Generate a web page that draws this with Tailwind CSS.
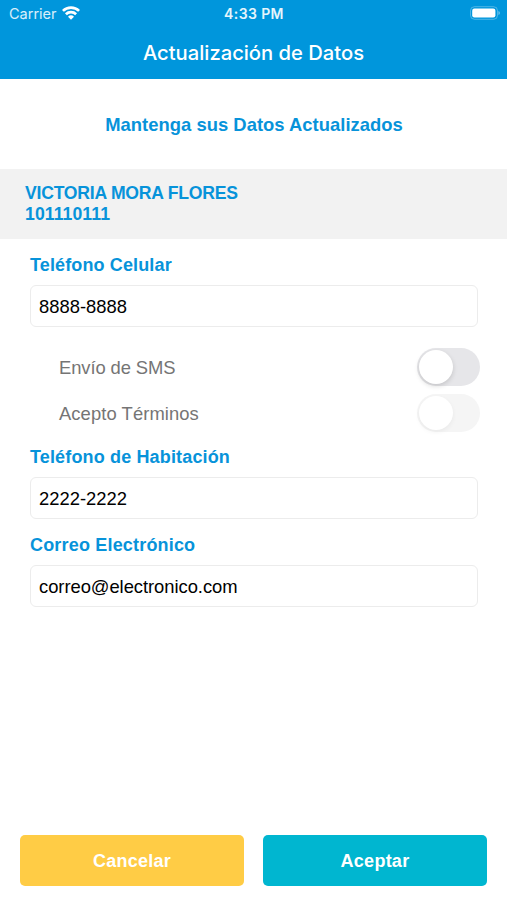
<!DOCTYPE html>
<html lang="es">
<head>
<meta charset="utf-8">
<title>Actualización de Datos</title>
<script src="https://cdn.jsdelivr.net/npm/@tailwindcss/browser@4"></script>
</head>
<body class="bg-white">
<div class="w-[507px] h-[900px] flex flex-col overflow-hidden font-['Liberation_Sans',Arial,sans-serif] text-[18.4px] leading-[21px] whitespace-nowrap">
  <header class="h-[79px] shrink-0 bg-[#0096dc] text-white font-['Inter',sans-serif]">
    <div class="h-[27px] grid grid-cols-3 items-center pl-[9px] pr-[7px]">
      <div class="flex items-center gap-[5px] text-[14.5px] text-white/85">
        <span>Carrier</span>
        <svg class="w-[18px] h-[14px] -mt-px" viewBox="0 0 18 14" fill="none" stroke="white" stroke-width="2.7"><path d="M.9 4.9a11.5 11.5 0 0 1 16.2 0"/><path d="M3.9 8.3a7.3 7.3 0 0 1 10.2 0"/><path d="M9 13.8 6 10.7a4.3 4.3 0 0 1 6 0z" fill="white" stroke="none"/></svg>
      </div>
      <div class="text-center text-[14px] tracking-[0.4px] font-semibold text-white/90 -ml-px">4:33 PM</div>
      <svg class="justify-self-end w-[31px] h-[14px] -mt-px" viewBox="0 0 31 14"><rect x="1.5" y=".7" width="27" height="12.6" rx="4" fill="none" stroke="white" stroke-opacity=".3"/><rect x="3.2" y="2.5" width="23.2" height="9" rx="2.2" fill="white"/><path d="M29.4 5v4q1.6-.5 1.6-2T29.4 5" fill="white" fill-opacity=".4"/></svg>
    </div>
    <h1 class="h-[51px] flex items-center justify-center text-[20.2px] font-medium">Actualización de Datos</h1>
  </header>
  <main class="flex-1 flex flex-col">
    <h2 class="h-[90px] flex items-center justify-center text-[#0793da] font-bold text-[18.4px] tracking-[0.03px] pl-px">Mantenga sus Datos Actualizados</h2>
    <section class="h-[70px] bg-[#f2f2f2] pl-[25px] pt-[14px] text-[#0793da] font-bold text-[17.6px]">
      <p class="tracking-[-0.23px]">VICTORIA MORA FLORES</p>
      <p class="tracking-[0.1px]">101110111</p>
    </section>
    <form class="pl-[30px] pr-[29px] pt-[16px]">
      <label class="block h-[30px] text-[#0793da] font-bold text-[18px] tracking-[0.13px]">Teléfono Celular</label>
      <div class="h-[42px] border border-[#ececec] rounded-[6px] pl-[8px] flex items-center">8888-8888</div>
      <div class="pl-[29px] pt-[17px] h-[120px] text-[#757575] mr-[-2px]">
        <div class="h-[46px] flex items-center justify-between"><span class="tracking-[-0.1px]">Envío de SMS</span>
          <span class="w-[63px] h-[38px] rounded-full bg-[#e6e6e9] p-[2px]"><span class="block size-[34px] rounded-full bg-white shadow-[0_2px_5px_rgba(0,0,0,0.15)]"></span></span></div>
        <div class="h-[46px] flex items-center justify-between"><span class="tracking-[0.08px]">Acepto Términos</span>
          <span class="w-[63px] h-[38px] rounded-full bg-[#f5f5f5] p-[2px]"><span class="block size-[34px] rounded-full bg-white shadow-[0_2px_5px_rgba(0,0,0,0.05)]"></span></span></div>
      </div>
      <label class="block h-[30px] text-[#0793da] font-bold text-[18px] tracking-[0.15px]">Teléfono de Habitación</label>
      <div class="h-[42px] border border-[#ececec] rounded-[6px] pl-[8px] flex items-center">2222-2222</div>
      <label class="block h-[46px] pt-[16px] text-[#0793da] font-bold text-[18px] tracking-[0.18px]">Correo Electrónico</label>
      <div class="h-[42px] border border-[#ececec] rounded-[6px] pl-[8px] flex items-center tracking-[-0.05px]">correo@electronico.com</div>
    </form>
    <div class="mt-auto mb-[14px] px-[20px] grid grid-cols-2 gap-[19px] text-white font-bold text-[18px] tracking-[0.25px]">
      <button class="h-[51px] pt-[2px] rounded-[5px] bg-[#ffcc45]">Cancelar</button>
      <button class="h-[51px] pt-[2px] rounded-[5px] bg-[#00b6d0]">Aceptar</button>
    </div>
  </main>
</div>
</body>
</html>
